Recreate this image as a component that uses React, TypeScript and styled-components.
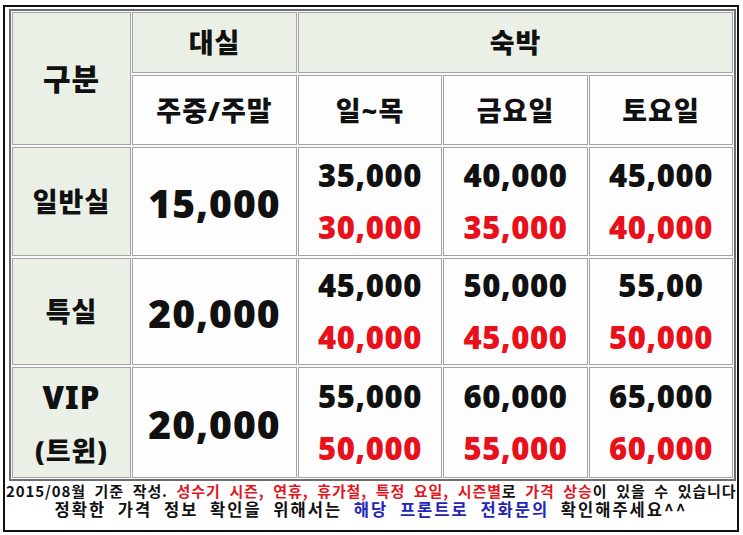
import React from 'react';
import styled, { createGlobalStyle } from 'styled-components';

const GlobalStyle = createGlobalStyle`
	html, body {
		margin: 0;
		padding: 0;
		background: #ffffff;
	}
`;

const Frame = styled.div`
	box-sizing: border-box;
	width: 736px;
	height: 527px;
	margin: 5px 0 0 3px;
	border: 2px solid #111;
	padding: 2px 1px 0 4px;
	background: #fff;
`;

const Table = styled.div`
	display: grid;
	grid-template-columns: 119px 165px 144px 145px 144px;
	grid-template-rows: 61px 70px 109px 107px 111px;
	gap: 2px 1px;
	border: 2px solid #6e6e6e;
	padding: 1px;
	background: #fafafa;
`;

const Cell = styled.div<{ $head?: boolean; $col?: string; $row?: string }>`
	box-sizing: border-box;
	display: flex;
	flex-direction: column;
	align-items: center;
	justify-content: center;
	border: 1px solid #a4a4a4;
	background: ${(p) => (p.$head ? '#eaf0e6' : '#fdfdfd')};
	grid-column: ${(p) => p.$col || 'auto'};
	grid-row: ${(p) => p.$row || 'auto'};
	color: #111;
	font-family: 'Noto Sans', 'Noto Sans CJK KR', sans-serif;
	font-weight: 900;
`;

const HeadText = styled.span<{ $size?: number }>`
	font-size: ${(p) => p.$size || 27}px;
	line-height: 1;
	letter-spacing: 1px;
`;

const TypeLines = styled.div`
	display: flex;
	flex-direction: column;
	align-items: center;
	gap: 24px;
	font-size: 29px;
	line-height: 30px;
`;

const BigPrice = styled.span`
	font-size: 39px;
	line-height: 1;
	letter-spacing: 1px;
	margin-top: 2px;
`;

const PriceLines = styled.div`
	display: flex;
	flex-direction: column;
	align-items: center;
	gap: 21px;
`;

const Price = styled.span<{ $red?: boolean }>`
	font-size: 31px;
	line-height: 31px;
	letter-spacing: 0.6px;
	color: ${(p) => (p.$red ? '#e8101a' : '#111')};
`;

const Footer = styled.div`
	font-family: 'Noto Sans CJK KR', sans-serif;
	font-weight: 700;
	text-align: center;
	color: #111;
	margin-left: -3px;
`;

const Line = styled.div<{ $size: number; $spacing: number; $word: number }>`
	white-space: nowrap;
	font-size: ${(p) => p.$size}px;
	line-height: 19px;
	letter-spacing: ${(p) => p.$spacing}px;
	word-spacing: ${(p) => p.$word}px;
`;

const Red = styled.span`
	color: #e3161e;
`;

const Blue = styled.span`
	color: #2424b8;
`;

const rooms = [
	{ name: ['일반실'], day: '15,000', prices: [['35,000', '30,000'], ['40,000', '35,000'], ['45,000', '40,000']] },
	{ name: ['특실'], day: '20,000', prices: [['45,000', '40,000'], ['50,000', '45,000'], ['55,00', '50,000']] },
	{ name: ['VIP', '(트윈)'], day: '20,000', prices: [['55,000', '50,000'], ['60,000', '55,000'], ['65,000', '60,000']] },
];

const App = () => {
	return (
		<>
			<GlobalStyle />
			<Frame>
				<Table>
					<Cell $head $row="1 / 3">
						<HeadText $size={30}>구분</HeadText>
					</Cell>
					<Cell $head>
						<HeadText>대실</HeadText>
					</Cell>
					<Cell $head $col="3 / 6">
						<HeadText>숙박</HeadText>
					</Cell>
					<Cell>
						<HeadText>주중/주말</HeadText>
					</Cell>
					<Cell>
						<HeadText>일~목</HeadText>
					</Cell>
					<Cell>
						<HeadText>금요일</HeadText>
					</Cell>
					<Cell>
						<HeadText>토요일</HeadText>
					</Cell>

					{rooms.map((room) => (
						<React.Fragment key={room.name.join('')}>
							<Cell $head>
								<TypeLines>
									{room.name.map((n) => (
										<HeadText key={n} $size={n === 'VIP' ? 31 : 27}>
											{n}
										</HeadText>
									))}
								</TypeLines>
							</Cell>
							<Cell>
								<BigPrice>{room.day}</BigPrice>
							</Cell>
							{room.prices.map(([normal, sale], i) => (
								<Cell key={i}>
									<PriceLines>
										<Price>{normal}</Price>
										<Price $red>{sale}</Price>
									</PriceLines>
								</Cell>
							))}
						</React.Fragment>
					))}
				</Table>

				<Footer>
					<Line $size={15} $spacing={0.9} $word={4.4}>
						2015/08월 기준 작성. <Red>성수기 시즌, 연휴, 휴가철, 특정 요일, 시즌별</Red>로{' '}
						<Red>가격 상승</Red>이 있을 수 있습니다
					</Line>
					<Line $size={16.5} $spacing={2} $word={6}>
						정확한 가격 정보 확인을 위해서는 <Blue>해당 프론트로 전화문의</Blue> 확인해주세요^^
					</Line>
				</Footer>
			</Frame>
		</>
	);
};

export default App;
